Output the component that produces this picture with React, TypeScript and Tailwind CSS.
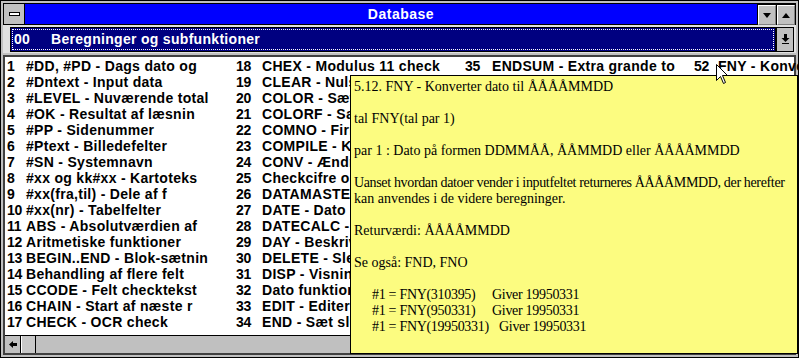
const col1 = [
  "#DD, #PD - Dags dato og",
  "#Dntext - Input data",
  "#LEVEL - Nuværende total",
  "#OK - Resultat af læsnin",
  "#PP - Sidenummer",
  "#Ptext - Billedefelter",
  "#SN - Systemnavn",
  "#xx og kk#xx - Kartoteks",
  "#xx(fra,til) - Dele af f",
  "#xx(nr) - Tabelfelter",
  "ABS - Absolutværdien af",
  "Aritmetiske funktioner",
  "BEGIN..END - Blok-sætnin",
  "Behandling af flere felt",
  "CCODE - Felt checktekst",
  "CHAIN - Start af næste r",
  "CHECK - OCR check",
];

const col2 = [
  "CHEX - Modulus 11 check",
  "CLEAR - Nulstil felter",
  "COLOR - Sæt farve",
  "COLORF - Sæt farve",
  "COMNO - Firmanummer",
  "COMPILE - Kompiler",
  "CONV - Ændring af",
  "Checkcifre og modulus",
  "DATAMASTER - Data",
  "DATE - Dato ÅÅMMDD",
  "DATECALC - Beregn",
  "DAY - Beskriv dag",
  "DELETE - Slet post",
  "DISP - Visning af",
  "Dato funktioner",
  "EDIT - Editering",
  "END - Sæt slut",
];

const col3 = ["ENDSUM - Extra grande to"];
const col4 = ["FNY - Konverter dato"];

const columns = [
  { start: 1, items: col1, numW: "w-[19px]" },
  { start: 18, items: col2, numW: "w-[26px]" },
  { start: 35, items: col3, numW: "w-[27px]" },
  { start: 52, items: col4, numW: "w-[24px]" },
];

function Btn({ up }: { up: boolean }) {
  return (
    <div className="w-[18px] h-[20px] mt-[1px] bg-[#c0c0c0] border-t border-l border-white border-r border-b border-r-[#808080] border-b-[#808080] flex items-center justify-center">
      <svg width="8" height="5" viewBox="0 0 8 5">
        {up ? <path d="M0 5 L4 0 L8 5 Z" fill="#000" /> : <path d="M0 0 L8 0 L4 5 Z" fill="#000" />}
      </svg>
    </div>
  );
}

export default function App() {
  return (
    <div className="relative w-[799px] h-[363px] bg-white overflow-hidden font-['Liberation_Sans',Arial,sans-serif]">
      <div className="w-[799px] h-[358px] border border-black bg-[#c0c0c0] px-[2px] pt-[2px] flex flex-col">
        {/* title bar */}
        <div className="h-[22px] flex border border-black">
          <div className="w-[21px] bg-[#c0c0c0] border-r border-black flex items-center justify-center">
            <div className="w-[11px] h-[4px] bg-white border border-black" />
          </div>
          <div className="flex-1 bg-[#0000ff] text-white font-bold text-[14px] tracking-[0.5px] flex items-center justify-center pl-[20px]">
            Database
          </div>
          <div className="flex gap-[1px] bg-black pl-[1px]">
            <Btn up={false} />
            <Btn up={true} />
          </div>
        </div>

        {/* combo row */}
        <div className="h-[28px] flex items-center bg-[#e0e0e0] pl-[7px] pr-[2px]">
          <div className="flex-1 h-[25px] border border-black bg-[#000080] p-[1px]">
            <div className="h-full border border-dotted border-white flex items-center text-white font-bold text-[14px] tracking-[0.3px] leading-none">
              <span className="w-[38px] pl-[1px]">00</span>
              <span>Beregninger og subfunktioner</span>
            </div>
          </div>
          <div className="w-[18px] h-[25px] bg-[#c0c0c0] border border-black flex items-center justify-center">
            <svg width="9" height="10" viewBox="0 0 9 10">
              <path d="M3 0 H6 V4 H8.5 L4.5 8 L0.5 4 H3 Z" fill="#000" />
              <rect x="1" y="9" width="7" height="1" fill="#000" />
            </svg>
          </div>
        </div>

        {/* list */}
        <div className="h-[300px] mt-[2px] border-2 border-[#404040] bg-white flex flex-col">
          <div className="flex-1 flex pl-[2px] pt-[1px] text-[14px] font-bold text-black leading-[16px]">
            {columns.map((c) => (
              <div key={c.start} className="w-[229px] shrink-0 overflow-hidden">
                {c.items.map((t, i) => (
                  <div key={i} className="h-[16px] flex whitespace-nowrap">
                    <span className={`${c.numW} shrink-0 tracking-[-0.3px]`}>{c.start + i}</span>
                    <span className="tracking-[0.3px]">{t}</span>
                  </div>
                ))}
              </div>
            ))}
          </div>
          <div className="h-[18px] border-t border-black bg-[#c0c0c0] flex">
            <div className="w-[16px] bg-[#c0c0c0] border-r border-black flex items-center justify-center">
              <svg width="8" height="7" viewBox="0 0 8 7">
                <path d="M0 3.5 L4 0 V2 H8 V5 H4 V7 Z" fill="#000" />
              </svg>
            </div>
            <div className="w-[15px] bg-[#c8c8c8] border-r border-black border-l border-l-white" />
          </div>
        </div>
      </div>

      {/* tooltip */}
      <div className="absolute left-[350px] top-[75px] w-[448px] h-[279px] bg-[#fcfc80] border border-black pl-[3px] pt-[3px] font-['Liberation_Serif','Times_New_Roman',serif] text-[14px] leading-[16px] text-black">
        <div>5.12. FNY - Konverter dato til ÅÅÅÅMMDD</div>
        <div className="h-[16px]" />
        <div>tal FNY(tal par 1)</div>
        <div className="h-[16px]" />
        <div>par 1 : Dato på formen DDMMÅÅ, ÅÅMMDD eller ÅÅÅÅMMDD</div>
        <div className="h-[16px]" />
        <div className="whitespace-nowrap tracking-[-0.35px]">Uanset hvordan datoer vender i inputfeltet returneres ÅÅÅÅMMDD, der herefter</div>
        <div>kan anvendes i de videre beregninger.</div>
        <div className="h-[16px]" />
        <div>Returværdi: ÅÅÅÅMMDD</div>
        <div className="h-[16px]" />
        <div>Se også: FND, FNO</div>
        <div className="h-[16px]" />
        <div className="tracking-[-0.3px]">
          <div className="pl-[18px] flex"><span className="w-[120px]">#1 = FNY(310395)</span><span>Giver 19950331</span></div>
          <div className="pl-[18px] flex"><span className="w-[120px]">#1 = FNY(950331)</span><span>Giver 19950331</span></div>
          <div className="pl-[18px] flex"><span className="w-[127px]">#1 = FNY(19950331)</span><span>Giver 19950331</span></div>
        </div>
      </div>

      {/* mouse cursor */}
      <svg className="absolute left-[716px] top-[64px]" width="13" height="21" viewBox="0 0 13 21">
        <path d="M0.5 0.5 L0.5 16.5 L4.5 12.5 L7.5 19.5 L9.5 18.5 L6.5 11.5 L11.5 11.5 Z" fill="#fff" stroke="#000" strokeWidth="1" />
      </svg>
    </div>
  );
}
